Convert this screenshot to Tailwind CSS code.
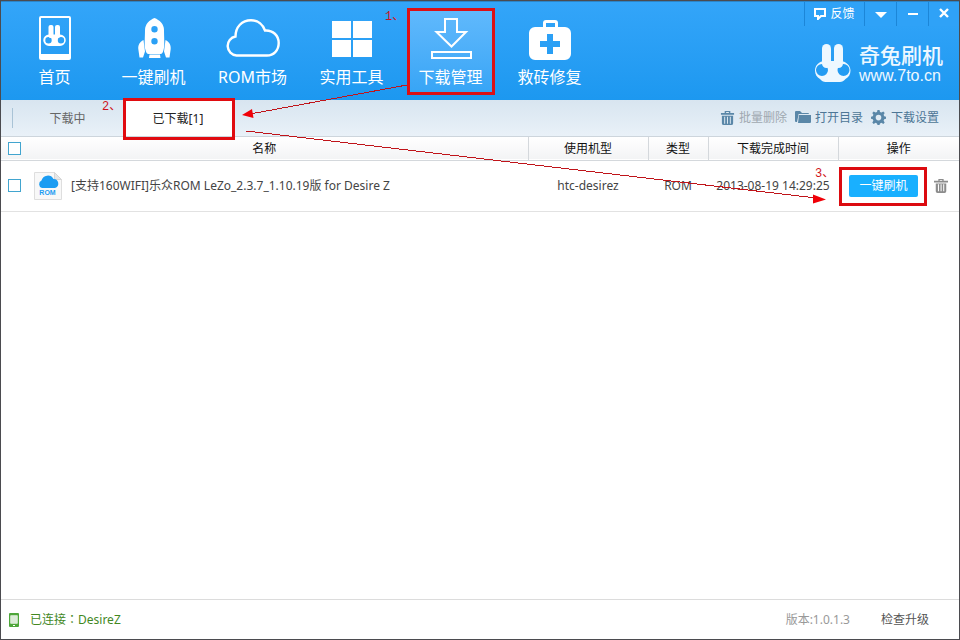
<!DOCTYPE html>
<html lang="zh-CN">
<head>
    <meta charset="UTF-8">
    <meta name="viewport" content="width=device-width, initial-scale=1.0">
    <title>奇兔刷机 - 下载管理</title>
    <script src="https://cdn.jsdelivr.net/npm/@tailwindcss/browser@4"></script>
</head>
<body class="relative flex min-h-screen flex-col overflow-x-hidden border border-[#4b4b4f] bg-white font-['Noto_Sans','Noto_Sans_CJK_SC',sans-serif] text-[12px] leading-[18px] text-[#444]">

    <!-- Header -->
    <header class="flex h-[99px] shrink-0 items-start justify-between border-t border-[#2c85c8] bg-linear-to-b from-[#33a5f9] to-[#1c98f0] text-white">
        <nav class="flex pt-[9px] pl-1 text-[16px] leading-[22px]">
            <a href="#" class="mx-2 flex h-[81px] w-[83px] flex-col items-center whitespace-nowrap">
                <svg class="mt-1 h-12 w-12" viewBox="0 0 48 48" fill="currentColor">
                    <path fill-rule="evenodd" d="M10 1h28a2 2 0 0 1 2 2v40a2 2 0 0 1-2 2H10a2 2 0 0 1-2-2V3a2 2 0 0 1 2-2zm0 2v36h28V3z"/>
                    <rect x="17.500" y="10" width="5" height="13" rx="2"/>
                    <rect x="24" y="10" width="5" height="13" rx="2"/>
                    <path fill-rule="evenodd" d="M18 19.500h11a5.700 5.700 0 0 1 0 11.500H18a5.700 5.700 0 0 1 0-11.500zm-.5 2.500a3.200 3.200 0 1 0 0 6.400 3.200 3.200 0 0 0 0-6.400zm12.500 0a3.200 3.200 0 1 0 0 6.400 3.200 3.200 0 0 0 0-6.400z"/>
                </svg>
                <span class="mt-[3px]">首页</span>
            </a>
            <a href="#" class="mx-2 flex h-[81px] w-[83px] flex-col items-center whitespace-nowrap">
                <svg class="mt-1 h-12 w-12" viewBox="0 0 48 48" fill="currentColor">
                    <path fill-rule="evenodd" d="M24.500 3C19.500 5 15 9 15 15c0 8-1 16 .5 20 .6 2.500 1.500 4 3 4h12c1.500 0 2.400-1.500 3-4 1.500-4 .5-12 .5-20 0-6-4.500-10-9.500-12zm0 8a3.200 3.200 0 1 1 0 6.400 3.200 3.200 0 0 1 0-6.400zm0 12a3.200 3.200 0 1 1 0 6.400 3.200 3.200 0 0 1 0-6.400z"/>
                    <path d="M19.500 39.500h10.500l.5 3.500h-11.500zM13.500 25c-4 2-5.500 5-5.200 9l1.200 8.500h3.500l2-6zM35.500 25c4 2 5.500 5 5.200 9l-1.200 8.500H36l-2-6z"/>
                </svg>
                <span class="mt-[3px]">一键刷机</span>
            </a>
            <a href="#" class="mx-2 flex h-[81px] w-[83px] flex-col items-center whitespace-nowrap">
                <svg class="mt-1 h-12 w-14" viewBox="0 0 56 48" fill="none" stroke="currentColor" stroke-width="2.400">
                    <path d="M11.500 40.500A9.600 9.600 0 0 1 10.500 21.500C10.500 12 17 5.200 26 5.200c7 0 12 4.500 14 10.300C48 15 53.700 20.500 53.700 28S48.500 40.500 42 40.500z"/>
                </svg>
                <span class="mt-[3px]">ROM市场</span>
            </a>
            <a href="#" class="mx-2 flex h-[81px] w-[83px] flex-col items-center whitespace-nowrap">
                <svg class="mt-1 h-12 w-12" viewBox="0 0 48 48" fill="currentColor">
                    <path d="M4 6h19v17H4zM25 6h19v17H25zM4 25h19v17H4zM25 25h19v17H25z"/>
                </svg>
                <span class="mt-[3px]">实用工具</span>
            </a>
            <a href="#" class="relative mx-2 flex h-[81px] w-[83px] flex-col items-center bg-linear-to-b from-[#60b9fc] to-[#37a5f6] whitespace-nowrap">
                <svg class="mt-1 h-12 w-12" viewBox="0 0 48 48" fill="none" stroke="currentColor" stroke-width="2">
                    <path d="M18 4h12v13h9L24.500 31.500 9.500 17H18zM5 37h39v6H5z"/>
                </svg>
                <span class="mt-[3px]">下载管理</span>
                <span class="absolute -inset-y-[3px] -right-[3px] -left-[2px] border-[3px] border-[#dc1015]"></span>
                <span class="absolute -top-[3px] -left-6 font-['Liberation_Mono','Noto_Sans_CJK_SC',monospace] text-[12px] leading-[18px] text-[#d0131c]">1、</span>
            </a>
            <a href="#" class="mx-2 flex h-[81px] w-[83px] flex-col items-center whitespace-nowrap">
                <svg class="mt-1 h-12 w-12" viewBox="0 0 48 48" fill="currentColor">
                    <path fill-rule="evenodd" d="M17 12V8a3 3 0 0 1 3-3h9a3 3 0 0 1 3 3v4h7a6 6 0 0 1 6 6v21a6 6 0 0 1-6 6H9a6 6 0 0 1-6-6V18a6 6 0 0 1 6-6zm3 0h9V8h-9zm1 7v7h-7v6h7v7h6v-7h7v-6h-7v-7z"/>
                </svg>
                <span class="mt-[3px]">救砖修复</span>
            </a>
        </nav>

        <div class="flex flex-col items-end">
            <div class="flex h-6 divide-x divide-[#1c86d8] border-l border-[#1c86d8] bg-[#2fa2f7]">
                <button type="button" class="flex w-15 items-center justify-center gap-1">
                    <svg class="h-3 w-3" viewBox="0 0 12 12" fill="none" stroke="currentColor" stroke-width="2"><path d="M1 1h10v7H7l-3 3V8H1z"/></svg>
                    反馈
                </button>
                <button type="button" aria-label="菜单" class="flex w-8 items-center justify-center">
                    <svg class="h-3 w-3" viewBox="0 0 12 12" fill="currentColor"><path d="M0 4h12L6 10z"/></svg>
                </button>
                <button type="button" aria-label="最小化" class="flex w-8 items-center justify-center">
                    <svg class="h-3 w-3" viewBox="0 0 12 12" fill="currentColor"><path d="M1 5h10v2H1z"/></svg>
                </button>
                <button type="button" aria-label="关闭" class="flex w-[30px] items-center justify-center">
                    <svg class="h-3 w-3" viewBox="0 0 12 12" fill="none" stroke="currentColor" stroke-width="2.400"><path d="M2 1l8 8M10 1l-8 8"/></svg>
                </button>
            </div>
            <div class="mt-[17px] mr-4 flex items-center gap-2">
                <svg class="h-10 w-9" viewBox="0 0 36 40" fill="#eef8ff">
                    <rect x="7" y="0" width="9" height="24" rx="4.500"/>
                    <rect x="19" y="0" width="9" height="24" rx="4.500"/>
                    <path fill-rule="evenodd" d="M10 17h15c6 0 10.500 4.500 10.500 9.500 0 4-2 7-5 8.500-1.500 2-3.500 3-5.500 3H10.500c-2 0-4-1-5.500-3-3-1.500-5-4.500-5-8.500C0 21.500 4 17 10 17zM7 20a6 6 0 1 0 0 12 6 6 0 0 0 0-12zm21.500 0a6 6 0 1 0 0 12 6 6 0 0 0 0-12z"/>
                </svg>
                <div class="text-[#eef8ff]">
                    <div class="text-[21px] leading-6 font-medium">奇兔刷机</div>
                    <div class="font-['Liberation_Sans',sans-serif] text-[16px] leading-[18px]">www.7to.cn</div>
                </div>
            </div>
        </div>
    </header>

    <!-- Tabs and toolbar -->
    <div class="flex h-[37px] shrink-0 items-stretch justify-between border-b border-[#cdd5dc] bg-linear-to-b from-[#d8e5f0] to-[#e9f1f8]">
        <div class="flex pl-[11px]">
            <span class="my-2 w-px bg-[#a9c3d6]"></span>
            <button type="button" class="w-[109px] pt-[2px] text-[#666]">下载中</button>
            <button type="button" class="relative ml-1 w-[106px] bg-white pt-[2px] pr-[2px] text-[#222]">
                已下载[1]
                <span class="absolute -inset-x-[3px] -top-[2px] -bottom-1 border-[3px] border-[#e00b10]"></span>
                <span class="absolute -top-[2px] -left-6 font-['Liberation_Mono','Noto_Sans_CJK_SC',monospace] text-[#d0131c]">2、</span>
            </button>
        </div>
        <div class="flex items-center gap-2 pr-5 text-[#4d7696]">
            <button type="button" class="flex items-center gap-1 text-[#a0a8b0]">
                <svg class="h-[15px] w-[15px]" viewBox="0 0 16 16" fill="#5a87a8"><path fill-rule="evenodd" d="M5 0h6v2h4v2H1V2h4zm1.500 1v1h3V1zM2 5h12v8a2 2 0 0 1-2 2H4a2 2 0 0 1-2-2zm2.500 1v7.500h1V6zm3 0v7.500h1V6zm3 0v7.500h1V6z"/></svg>
                批量删除
            </button>
            <button type="button" class="flex items-center gap-1">
                <svg class="h-4 w-4" viewBox="0 0 16 16" fill="#5a87a8"><path d="M0 2a1 1 0 0 1 1-1h4l2 2h6a1 1 0 0 1 1 1H3.500v1L2 12H1a1 1 0 0 1-1-1zM4 5h12v7a1 1 0 0 1-1 1H3z"/></svg>
                打开目录
            </button>
            <button type="button" class="flex items-center gap-1">
                <svg class="h-4 w-4" viewBox="0 0 16 16" fill="#5a87a8"><path fill-rule="evenodd" d="M6.500 0h2l.5 2 1.500.6 1.800-1.100 1.400 1.400-1.100 1.800.6 1.500 1.800.5v2l-1.800.5-.6 1.500 1.100 1.800-1.400 1.400-1.800-1.100-1.500.6-.5 1.600h-2l-.5-1.600-1.500-.6-1.800 1.100-1.400-1.400 1.100-1.800-.6-1.500L0 8.700v-2l1.800-.5.6-1.500-1.100-1.800 1.400-1.400 1.800 1.100L6 2zm1 4.800a2.800 2.800 0 1 0 0 5.600 2.800 2.800 0 0 0 0-5.600z"/></svg>
                下载设置
            </button>
        </div>
    </div>

    <!-- Downloads -->
    <main class="flex-1">
        <table class="w-full table-fixed border-collapse">
            <thead>
                <tr class="h-[23px] border-b border-[#d4d8dc] bg-linear-to-b from-white to-[#f3f4f5] text-[#111]">
                    <th class="w-[26px] p-0 pl-[7px]"><input type="checkbox" aria-label="全选" class="block h-[13px] w-[13px] appearance-none border border-[#42a5cf] bg-white"></th>
                    <th class="p-0 pt-[2px] pr-[26px] font-normal">名称</th>
                    <th class="w-[120px] border-l border-[#d4d8dc] p-0 pt-[2px] font-normal">使用机型</th>
                    <th class="w-[60px] border-l border-[#d4d8dc] p-0 pt-[2px] font-normal">类型</th>
                    <th class="w-[130px] border-l border-[#d4d8dc] p-0 pt-[2px] font-normal">下载完成时间</th>
                    <th class="w-[121px] border-l border-[#d4d8dc] p-0 pt-[2px] font-normal">操作</th>
                </tr>
            </thead>
            <tbody>
                <tr class="h-[51px] border-b border-[#e2e2e2] text-center">
                    <td class="p-0 pl-[7px]"><input type="checkbox" aria-label="选择 LeZo_2.3.7" class="block h-[13px] w-[13px] appearance-none border border-[#42a5cf] bg-white"></td>
                    <td class="p-0 pl-[6px]">
                        <div class="flex items-center gap-2 whitespace-nowrap">
                            <svg class="h-7 w-[30px]" viewBox="0 0 30 28">
                                <path d="M1.500.5h20l7 7v20h-27z" fill="#f8f8f8" stroke="#dedede"/>
                                <path d="M21.500.5v7h7z" fill="#e6e6e6" stroke="#d6d6d6"/>
                                <path d="M9 16a4 4 0 0 1-.5-7.500 6.500 6.500 0 0 1 12-1.500 4.600 4.600 0 0 1 1.500 9z" fill="#1b9cf2"/>
                                <text x="14.500" y="23" text-anchor="middle" font-family="Liberation Sans" font-size="7" font-weight="bold" fill="#1b9cf2">ROM</text>
                            </svg>
                            <span>[支持160WIFI]乐众ROM LeZo_2.3.7_1.10.19版 for Desire Z</span>
                        </div>
                    </td>
                    <td class="p-0">htc-desirez</td>
                    <td class="p-0">ROM</td>
                    <td class="p-0 whitespace-nowrap">2013-08-19 14:29:25</td>
                    <td class="p-0">
                        <div class="flex items-center justify-between pr-[11px] pl-[11px]">
                            <div class="relative">
                                <button type="button" class="block h-[22px] w-[69px] rounded-xs bg-[#19b0ff] pt-px text-white">一键刷机</button>
                                <span class="absolute -top-2 -right-[9px] -bottom-[9px] -left-[10px] border-[3px] border-[#dc0b10]"></span>
                                <span class="absolute -top-[10px] -left-[34px] font-['Liberation_Mono','Noto_Sans_CJK_SC',monospace] text-[#d0131c]">3、</span>
                            </div>
                            <button type="button" aria-label="删除">
                                <svg class="block h-[14px] w-[14px]" viewBox="0 0 16 16" fill="#8c8c8c"><path fill-rule="evenodd" d="M5 0h6v2h5v2H0V2h5zm1.500 1v1h3V1zM2 5h12v9a2 2 0 0 1-2 2H4a2 2 0 0 1-2-2zm2.500 1v8h1.200V6zm3 0v8h1.200V6zm3 0v8h1.200V6z"/></svg>
                            </button>
                        </div>
                    </td>
                </tr>
            </tbody>
        </table>
    </main>

    <!-- Status bar -->
    <footer class="flex h-10 shrink-0 items-center justify-between border-t border-[#dcdcdc] pr-[30px] pl-2">
        <div class="flex items-center gap-[11px] text-[#43881f]">
            <svg class="h-[14px] w-[10px]" viewBox="0 0 10 14"><path fill="#4ea63a" fill-rule="evenodd" d="M1 0h8a1 1 0 0 1 1 1v12a1 1 0 0 1-1 1H1a1 1 0 0 1-1-1V1a1 1 0 0 1 1-1zm.5 2.500v8h7v-8zM4 12v1h2v-1z"/><path fill="#dcecd8" d="M1.500 2.500h7v8h-7z"/></svg>
            <span>已连接<span lang="zh-TW" class="font-['Noto_Sans_CJK_TC',sans-serif]">：</span>DesireZ</span>
        </div>
        <div class="flex gap-[31px]">
            <span class="text-[#999]">版本:1.0.1.3</span>
            <a href="#" class="text-[#555]">检查升级</a>
        </div>
    </footer>

    <!-- Step arrows -->
    <svg class="pointer-events-none absolute -top-px -left-px h-[640px] w-[960px]" viewBox="0 0 960 640" fill="#f00008" stroke="#c0141a">
        <path d="M407 85L250 114M246 131L816 198" fill="none" shape-rendering="crispEdges"/>
        <path stroke="none" d="M242 115l10-6 1.500 9zM826 199.500l-13-5v9z"/>
    </svg>
</body>
</html>
